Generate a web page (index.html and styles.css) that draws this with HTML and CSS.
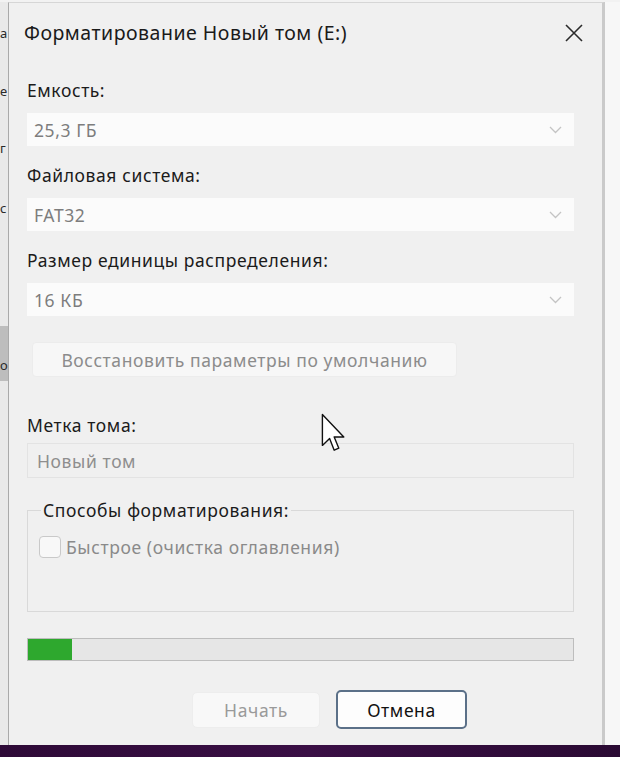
FILE: index.html
```html
<!DOCTYPE html>
<html lang="ru">
<head>
    <meta charset="UTF-8">
    <meta name="viewport" content="width=device-width, initial-scale=1.0">
    <title>Форматирование Новый том (E:)</title>
    <link rel="stylesheet" href="styles.css">
</head>
<body>
    <div class="desk">
        <div class="behind">
            <div class="behind-line l1">а</div>
            <div class="behind-line l2">е</div>
            <div class="behind-line l3">г</div>
            <div class="behind-line l4">с</div>
            <div class="behind-block"></div>
            <div class="behind-line l5">о</div>
        </div>

        <div class="dialog">
            <header class="titlebar">
                <span class="title">Форматирование Новый том (E:)</span>
                <span class="close">
                    <svg width="18" height="18" viewBox="0 0 18 18">
                        <path d="M1 1 L17 17 M17 1 L1 17" stroke="#2b2b2b" stroke-width="1.6" fill="none"/>
                    </svg>
                </span>
            </header>

            <main class="content">
                <div class="label first">Емкость:</div>
                <div class="select">
                    <span>25,3 ГБ</span>
                    <svg class="chevron" width="13" height="8" viewBox="0 0 13 8">
                        <polyline points="1,1 6.5,6.5 12,1" stroke="#c4c4c4" stroke-width="1.3" fill="none"/>
                    </svg>
                </div>

                <div class="label">Файловая система:</div>
                <div class="select">
                    <span>FAT32</span>
                    <svg class="chevron" width="13" height="8" viewBox="0 0 13 8">
                        <polyline points="1,1 6.5,6.5 12,1" stroke="#c4c4c4" stroke-width="1.3" fill="none"/>
                    </svg>
                </div>

                <div class="label">Размер единицы распределения:</div>
                <div class="select">
                    <span>16 КБ</span>
                    <svg class="chevron" width="13" height="8" viewBox="0 0 13 8">
                        <polyline points="1,1 6.5,6.5 12,1" stroke="#c4c4c4" stroke-width="1.3" fill="none"/>
                    </svg>
                </div>

                <button type="button" class="reset" disabled>Восстановить параметры по умолчанию</button>

                <div class="label volume">Метка тома:</div>
                <div class="textbox">Новый том</div>

                <fieldset class="group">
                    <legend>Способы форматирования:</legend>
                    <div class="check-row">
                        <span class="checkbox"></span>
                        <span>Быстрое (очистка оглавления)</span>
                    </div>
                </fieldset>

                <div class="progress">
                    <div class="progress-fill" style="width: 8%"></div>
                </div>

                <div class="actions">
                    <button type="button" class="btn start" disabled>Начать</button>
                    <button type="button" class="btn cancel">Отмена</button>
                </div>
            </main>

            <svg class="cursor" width="26" height="40" viewBox="0 0 13 20">
                <path d="M0.7 0.7 L0.7 16.2 L4.3 12.8 L6.6 18.6 L8.9 17.6 L6.6 12.0 L11.4 12.0 Z"
                      fill="#fff" stroke="#111" stroke-width="0.7" stroke-linejoin="round"/>
            </svg>
        </div>

        <div class="edge"></div>
    </div>
    <div class="taskbar"></div>
</body>
</html>
```

FILE: styles.css
```css
body {
    margin: 0;
    width: 620px;
    height: 757px;
    overflow: hidden;
    background-color: #f4f4f4;
    font-family: 'Noto Sans', 'Open Sans', sans-serif;
    color: #1b1b1b;
}

.desk {
    display: flex;
    height: 745px;
    padding-top: 2px;
    box-sizing: border-box;
    background-color: #f2f2f2;
}

/* window underneath, only its right edge shows */
.behind {
    width: 8px;
    overflow: hidden;
    background-color: #e9e9e9;
    font-size: 13px;
    color: #2a2a2a;
}

.behind-line {
    height: 20px;
    line-height: 20px;
    margin-left: 0;
}

.l1 { margin-top: 21px; }
.l2 { margin-top: 38px; }
.l3 { margin-top: 37px; }
.l4 { margin-top: 40px; }
.l5 { margin-top: -26px; }

.behind-block {
    height: 55px;
    margin-top: 108px;
    background-color: #bdbdbd;
}

.dialog {
    position: relative;
    width: 597px;
    box-sizing: border-box;
    background-color: #f0f0f0;
    border-top: 1px solid #d6d6d6;
    border-left: 1px solid #a9a9a9;
    border-right: 3px solid #cacaca;
}

.titlebar {
    display: flex;
    align-items: center;
    justify-content: space-between;
    height: 59px;
    padding: 0 19px 0 15px;
}

.title {
    font-size: 19.5px;
    letter-spacing: 0.5px;
    color: #1a1a1a;
}

.close {
    display: flex;
}

.content {
    padding: 0 28px 0 18px;
    font-size: 17.5px;
    letter-spacing: 0.6px;
}

.label {
    line-height: 22px;
    margin-top: 18px;
}

.label.first {
    margin-top: 17px;
}

.select {
    display: flex;
    align-items: center;
    justify-content: space-between;
    height: 33px;
    margin-top: 12px;
    padding: 0 12px 0 7px;
    background-color: #fbfbfb;
    color: #7d7d7d;
}

.reset {
    display: block;
    width: 425px;
    height: 35px;
    margin: 26px 0 0 5px;
    padding: 0;
    font-family: inherit;
    font-size: inherit;
    letter-spacing: inherit;
    color: #8c8c8c;
    background-color: #f7f7f7;
    border: 1px solid #ececec;
    border-radius: 4px;
}

.label.volume {
    margin-top: 37px;
}

.textbox {
    height: 35px;
    margin-top: 7px;
    padding: 0 9px;
    box-sizing: border-box;
    display: flex;
    align-items: center;
    color: #8e8e8e;
    border: 1px solid #e3e3e3;
    background-color: #f0f0f0;
}

.group {
    margin: 21px 0 0 0;
    padding: 14px 10px 0 11px;
    height: 113px;
    box-sizing: border-box;
    border: 1px solid #d9d9d9;
}

legend {
    padding: 0 2px;
    margin-left: 2px;
    line-height: 22px;
    color: #1b1b1b;
}

.check-row {
    display: flex;
    align-items: center;
    gap: 5px;
    color: #8a8a8a;
}

.checkbox {
    width: 22px;
    height: 22px;
    box-sizing: border-box;
    border: 1px solid #c9c9c9;
    border-radius: 4px;
    background-color: #f8f8f8;
}

.progress {
    height: 23px;
    margin-top: 26px;
    box-sizing: border-box;
    border: 1px solid #bdbdbd;
    background-color: #e6e6e6;
    display: flex;
}

.progress-fill {
    background-color: #2ea82e;
}

.actions {
    display: flex;
    align-items: center;
    gap: 16px;
    margin: 29px 0 0 165px;
}

.btn {
    width: 128px;
    height: 36px;
    padding: 0;
    font-family: inherit;
    font-size: inherit;
    letter-spacing: inherit;
    border-radius: 5px;
}

.start {
    color: #9a9a9a;
    background-color: #f8f8f8;
    border: 1px solid #ededed;
}

.cancel {
    width: 131px;
    height: 39px;
    color: #111;
    background-color: #fdfdfd;
    border: 2px solid #5b7088;
}

.cursor {
    position: absolute;
    left: 312px;
    top: 410px;
}

.edge {
    flex: 1;
    background-color: #f7f7f7;
}

.taskbar {
    height: 12px;
    background: linear-gradient(90deg, #2e0a37, #3a0f45 50%, #2a0a33);
}
```
